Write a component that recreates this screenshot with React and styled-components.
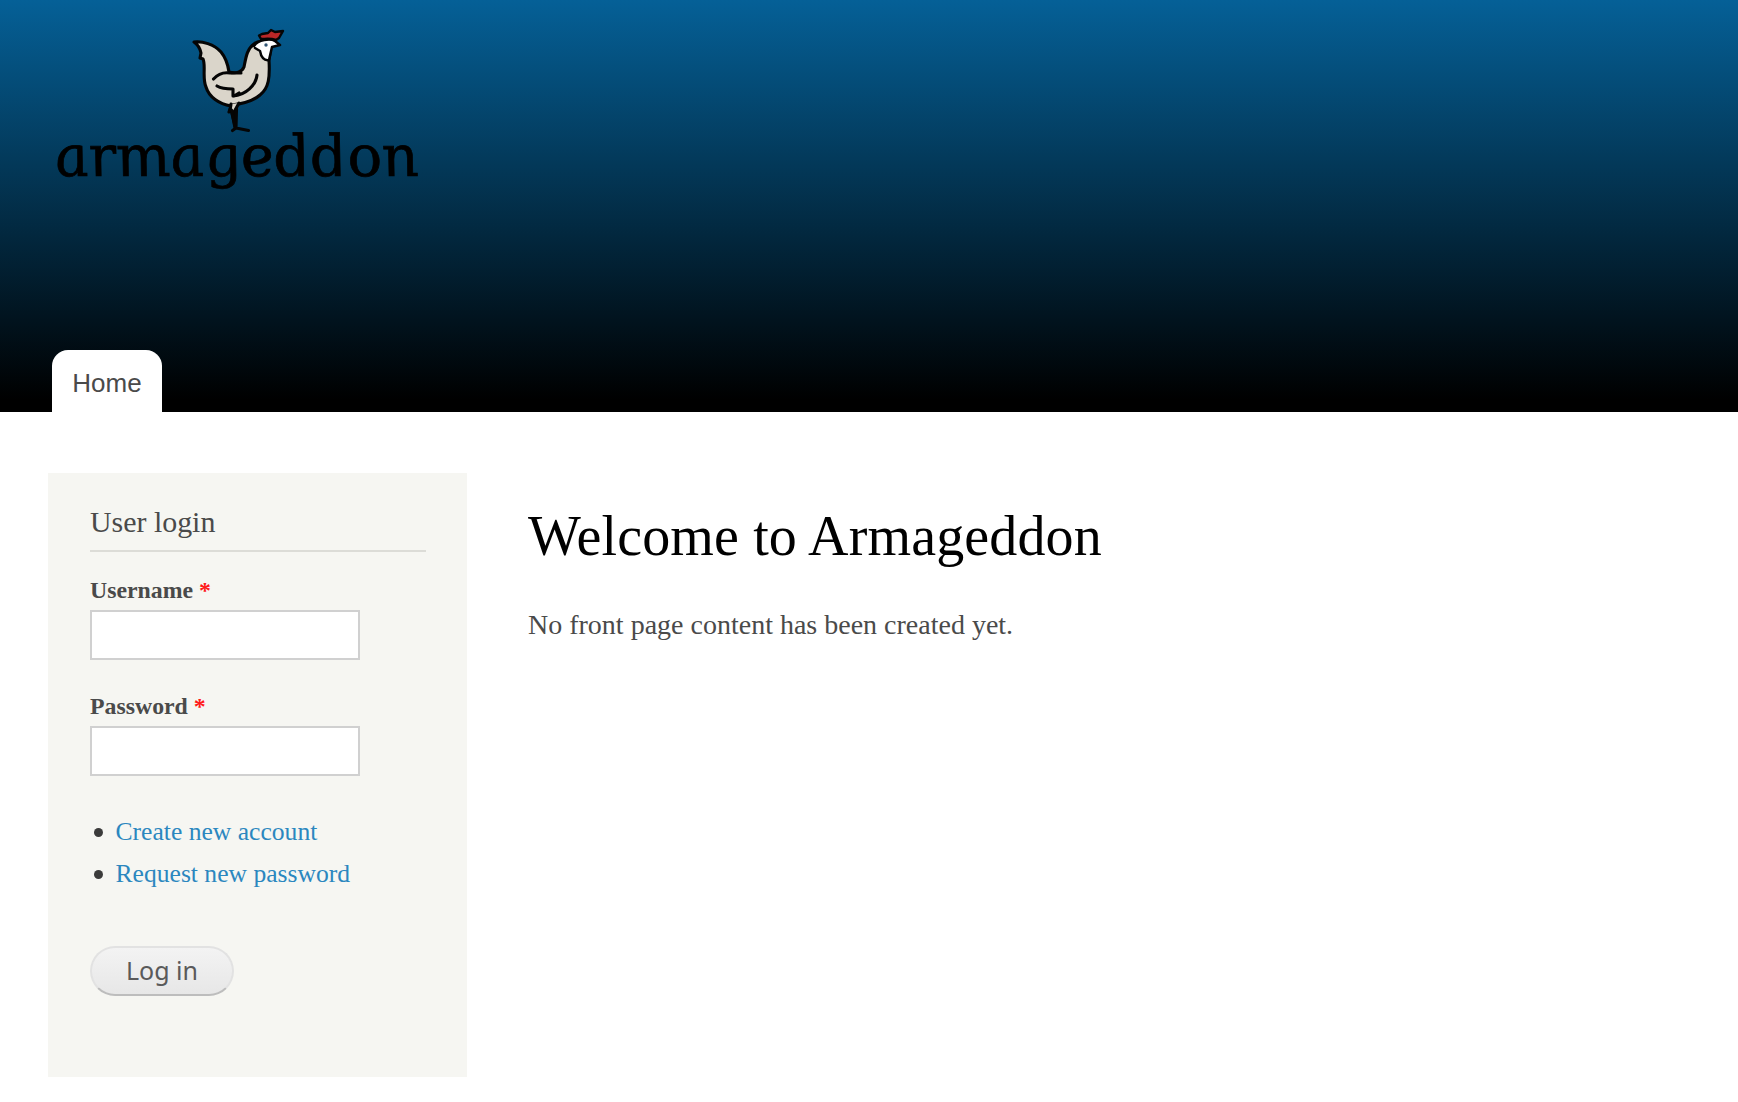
import React from 'react';
import styled, { createGlobalStyle } from 'styled-components';

const GlobalStyle = createGlobalStyle`
  * { box-sizing: border-box; }
  body {
    margin: 0;
    background: #fff;
    color: #4a4a4a;
    font-family: "Liberation Serif", "Times New Roman", serif;
  }
`;

const Header = styled.header`
  height: 412px;
  padding: 28px 52px 0;
  display: flex;
  flex-direction: column;
  justify-content: space-between;
  align-items: flex-start;
  background: linear-gradient(to bottom, #056097 0%, #000 97%);
`;

const Brand = styled.a`
  display: flex;
  flex-direction: column;
  color: #000;
  text-decoration: none;
`;

const Rooster = styled.svg`
  display: block;
  width: 94px;
  height: 106px;
  margin-left: 140px;
`;

const Wordmark = styled.span`
  margin: -11px 0 0 2px;
  font: italic 57.5px/68px "DejaVu Serif", serif;
  letter-spacing: -0.3px;
  transform: skewX(12deg);
  -webkit-text-stroke: 0.7px #000;
`;

const Tab = styled.a`
  width: 110px;
  height: 62px;
  border-radius: 16px 16px 0 0;
  background: #fff;
  color: #4a4a4a;
  text-align: center;
  text-decoration: none;
  font: 26px/66px "Liberation Sans", Arial, sans-serif;
`;

const Columns = styled.div`
  display: flex;
  align-items: flex-start;
  gap: 61px;
  padding: 61px 48px 0;
`;

const Sidebar = styled.aside`
  width: 419px;
  height: 604px;
  padding: 32px 41px 0 42px;
  background: #f6f6f2;
`;

const BlockTitle = styled.h2`
  height: 47px;
  margin: 0 0 20px;
  border-bottom: 2px solid #dcdcd7;
  font-size: 29.9px;
  font-weight: 400;
  line-height: 34px;
`;

const Field = styled.div`
  height: 116px;
`;

const Label = styled.label`
  display: block;
  height: 38px;
  font-size: 23.8px;
  font-weight: 700;
  line-height: 36px;
`;

const Required = styled.span`
  color: #ff1a1a;
`;

const Input = styled.input`
  display: block;
  width: 270px;
  height: 50px;
  padding: 4px;
  border: 2px solid #d0d0d0;
  border-radius: 0;
  background: #fff;
  outline: none;
`;

const Links = styled.ul`
  margin: 7px 0 0;
  padding: 0;
  list-style: none;
`;

const LinkItem = styled.li`
  display: flex;
  align-items: center;
  gap: 12.5px;
  height: 42px;
  padding-left: 4px;

  &::before {
    content: "";
    width: 9px;
    height: 9px;
    border-radius: 50%;
    background: #3b3b3b;
  }
`;

const Link = styled.a`
  color: #2b87bf;
  font-size: 25.6px;
  line-height: 42px;
  text-decoration: none;
`;

const Button = styled.button`
  display: block;
  width: 144px;
  height: 50px;
  margin-top: 51px;
  padding: 0 0 2px;
  border: 2px solid #e2e2e2;
  border-bottom-color: #bdbdbd;
  border-radius: 25px;
  background: linear-gradient(#f3f3f3, #e7e7e7);
  color: #5a5a5a;
  font: 25px/44px "Noto Sans", sans-serif;
`;

const Main = styled.main`
  padding-top: 31px;
`;

const Title = styled.h1`
  margin: 0;
  color: #000;
  font-size: 56px;
  font-weight: 400;
  letter-spacing: 0.14px;
  line-height: 64px;
`;

const Message = styled.p`
  margin: 40px 0 0;
  font-size: 28px;
  line-height: 34px;
`;

function FormField({ id, label, type }) {
  return (
    <Field>
      <Label htmlFor={id}>{label} <Required>*</Required></Label>
      <Input id={id} type={type} />
    </Field>
  );
}

function RoosterIcon() {
  return (
    <Rooster viewBox="192 28 94 106" fill="none" stroke="#050505" strokeWidth="3.1" strokeLinecap="round" strokeLinejoin="round">
      <path d="M194 42C202 41 214 44 221 52C226 58 228 65 229 72C236 74 242 72 244 67C246 57 247 49 254 44C257 41 265 40 269 43C271 49 270 55 269 60C270 77 269 88 260 95C252 102 241 104 232 105L229 112L231 106C219 104 209 97 206 87C202 78 206 65 203 59L200 58L201 53C200 48 197 44 194 42Z" fill="#dad5ca" />
      <path d="M231 104L230 111L234 112L239 103" fill="#dad5ca" />
      <path d="M261 39L259 35.500L262 34L268 33L271 30L275 32L283 31L279 38L276 40C270 38 266 39 261 39Z" fill="#ba2727" strokeWidth="2.4" />
      <path d="M254 46C258 40 270 38 275 42L279 45L272 48L269 60L262 59L258 51Z" fill="#fff" stroke="none" />
      <path d="M254 46C258 40 270 38 275 41L280 45L272 47L269 60C264 61 261 57 260 51L255 48" strokeWidth="2.5" />
      <path d="M213.500 79C218 74 224 72 230 73L241 73M217 86C222 89 228 89 233 89L233 96C246 95 256 85 257 75M234 96L239 93" />
      <path d="M230 112L236 110L237 128L234 128Z" fill="#050505" stroke="none" />
      <path d="M231.500 110L235 128M236.500 109L236 128M232.500 130.500L236 128L248.500 130.500" />
      <circle cx="266" cy="45" r="1.700" fill="#315574" stroke="none" />
    </Rooster>
  );
}

export default function App() {
  return (
    <>
      <GlobalStyle />
      <Header>
        <Brand>
          <RoosterIcon />
          <Wordmark>armageddon</Wordmark>
        </Brand>
        <Tab>Home</Tab>
      </Header>
      <Columns>
        <Sidebar>
          <BlockTitle>User login</BlockTitle>
          <FormField id="name" label="Username" type="text" />
          <FormField id="pass" label="Password" type="password" />
          <Links>
            <LinkItem><Link>Create new account</Link></LinkItem>
            <LinkItem><Link>Request new password</Link></LinkItem>
          </Links>
          <Button type="button">Log in</Button>
        </Sidebar>
        <Main>
          <Title>Welcome to Armageddon</Title>
          <Message>No front page content has been created yet.</Message>
        </Main>
      </Columns>
    </>
  );
}
